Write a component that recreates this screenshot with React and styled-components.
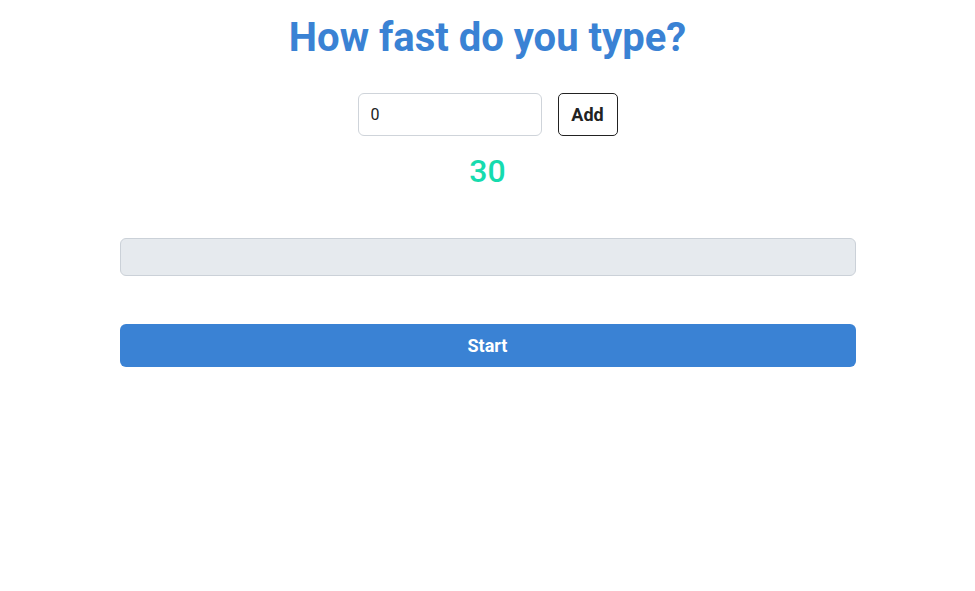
import { useState } from "react";
import styled, { createGlobalStyle } from "styled-components";

const GlobalStyle = createGlobalStyle`
  body {
    margin: 0;
    background: #ffffff;
    font-family: Roboto, "Liberation Sans", sans-serif;
  }
`;

const Page = styled.main`
  display: flex;
  flex-direction: column;
  align-items: center;
  padding-top: 13px;
`;

const Title = styled.h1`
  margin: 0;
  font-size: 40px;
  font-weight: 700;
  line-height: 50px;
  color: #3a82d4;
`;

const AddRow = styled.div`
  display: flex;
  gap: 16px;
  margin-top: 30px;
`;

const SecondsInput = styled.input`
  box-sizing: border-box;
  width: 184px;
  height: 43px;
  padding: 0 12px;
  border: 1px solid #cfd4da;
  border-radius: 6px;
  font-family: inherit;
  font-size: 16px;
  color: #222;
  outline: none;
`;

const AddButton = styled.button`
  box-sizing: border-box;
  width: 60px;
  height: 43px;
  border: 1px solid #222;
  border-radius: 5px;
  background: #fff;
  font-family: inherit;
  font-size: 18px;
  font-weight: 700;
  color: #222;
`;

const Timer = styled.div`
  margin-top: 16px;
  font-size: 32px;
  font-weight: 500;
  line-height: 38px;
  color: #16dbae;
`;

const Column = styled.div`
  width: 736px;
  display: flex;
  flex-direction: column;
`;

const TypingArea = styled.input`
  box-sizing: border-box;
  width: 100%;
  height: 38px;
  margin-top: 48px;
  border: 1px solid #cbd1d8;
  border-radius: 6px;
  background: #e6eaee;
`;

const StartButton = styled.button`
  width: 100%;
  height: 43px;
  margin-top: 48px;
  border: none;
  border-radius: 6px;
  background: #3a82d4;
  color: #fff;
  font-family: inherit;
  font-size: 18px;
  font-weight: 700;
`;

export default function App() {
  const [seconds, setSeconds] = useState("0");
  return (
    <>
      <GlobalStyle />
      <Page>
        <Title>How fast do you type?</Title>
        <AddRow>
          <SecondsInput value={seconds} onChange={(e) => setSeconds(e.target.value)} />
          <AddButton>Add</AddButton>
        </AddRow>
        <Timer>30</Timer>
        <Column>
          <TypingArea disabled />
          <StartButton>Start</StartButton>
        </Column>
      </Page>
    </>
  );
}
